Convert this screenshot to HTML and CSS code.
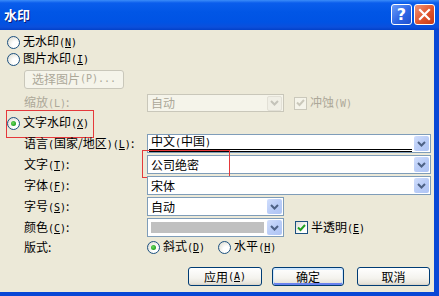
FILE: index.html
```html
<!DOCTYPE html>
<html>
<head>
<meta charset="utf-8">
<link rel="stylesheet" href="styles.css">
</head>
<body>
<div class="window">
  <div class="titlebar">
    <div class="title">水印</div>
    <div class="tbtns">
      <div class="tbtn help">?</div>
      <div class="tbtn close">
        <svg width="13" height="13" viewBox="0 0 13 13"><path d="M2 2 L11 11 M11 2 L2 11" stroke="#fff" stroke-width="2.2" stroke-linecap="square"/></svg>
      </div>
    </div>
  </div>
  <div class="client">
    <div class="row r1">
      <span class="radio"></span><span class="rtext">无水印<span class="mn">(<u>N</u>)</span></span>
    </div>
    <div class="row r2">
      <span class="radio"></span><span class="rtext">图片水印<span class="mn">(<u>I</u>)</span></span>
    </div>
    <div class="row r3">
      <div class="btn disabled pick">选择图片<span class="mn">(P)...</span></div>
    </div>
    <div class="row r4 field">
      <span class="label dis">缩放<span class="mn">(L)</span>:</span>
      <div class="combo short disabled-combo">
        <span class="val">自动</span>
        <span class="drop dis-drop"><svg width="9" height="6" viewBox="0 0 9 6"><path d="M1 1 L4.5 4.5 L8 1" fill="none" stroke="#C4C3BA" stroke-width="2"/></svg></span>
      </div>
      <span class="check disabled-check"><svg width="9" height="8" viewBox="0 0 9 8"><path d="M1 3.5 L3.5 6 L8 1" fill="none" stroke="#CAC8BB" stroke-width="2"/></svg></span>
      <span class="ctext dis">冲蚀<span class="mn">(W)</span></span>
    </div>
    <div class="row r5">
      <span class="radio checked"><span class="dot"></span></span><span class="rtext">文字水印<span class="mn">(<u>X</u>)</span></span>
      <div class="mark mark1"></div>
    </div>
    <div class="row r6 field">
      <span class="label">语言<span class="mn">(</span>国家/地区<span class="mn">)(<u>L</u>)</span>:</span>
      <div class="combo full">
        <span class="val lang">中文<span class="mn">(</span>中国<span class="mn">)</span></span>
        <span class="drop"><svg width="9" height="6" viewBox="0 0 9 6"><path d="M1 1 L4.5 4.5 L8 1" fill="none" stroke="#4D6185" stroke-width="2"/></svg></span>
      </div>
    </div>
    <div class="row r7 field">
      <span class="label">文字<span class="mn">(<u>T</u>)</span>:</span>
      <div class="combo full">
        <span class="val">公司绝密</span>
        <span class="drop"><svg width="9" height="6" viewBox="0 0 9 6"><path d="M1 1 L4.5 4.5 L8 1" fill="none" stroke="#4D6185" stroke-width="2"/></svg></span>
      </div>
      <div class="mark mark2"></div>
    </div>
    <div class="row r8 field">
      <span class="label">字体<span class="mn">(<u>F</u>)</span>:</span>
      <div class="combo full">
        <span class="val">宋体</span>
        <span class="drop"><svg width="9" height="6" viewBox="0 0 9 6"><path d="M1 1 L4.5 4.5 L8 1" fill="none" stroke="#4D6185" stroke-width="2"/></svg></span>
      </div>
    </div>
    <div class="row r9 field">
      <span class="label">字号<span class="mn">(<u>S</u>)</span>:</span>
      <div class="combo short">
        <span class="val">自动</span>
        <span class="drop"><svg width="9" height="6" viewBox="0 0 9 6"><path d="M1 1 L4.5 4.5 L8 1" fill="none" stroke="#4D6185" stroke-width="2"/></svg></span>
      </div>
    </div>
    <div class="row r10 field">
      <span class="label">颜色<span class="mn">(<u>C</u>)</span>:</span>
      <div class="combo short">
        <span class="swatch"></span>
        <span class="drop"><svg width="9" height="6" viewBox="0 0 9 6"><path d="M1 1 L4.5 4.5 L8 1" fill="none" stroke="#4D6185" stroke-width="2"/></svg></span>
      </div>
      <span class="check"><svg width="9" height="8" viewBox="0 0 9 8"><path d="M1 3.5 L3.5 6 L8 1" fill="none" stroke="#21A121" stroke-width="2"/></svg></span>
      <span class="ctext">半透明<span class="mn">(<u>E</u>)</span></span>
    </div>
    <div class="row r11 field">
      <span class="label">版式:</span>
      <span class="radio checked"><span class="dot"></span></span><span class="rtext">斜式<span class="mn">(<u>D</u>)</span></span>
      <span class="radio second"></span><span class="rtext">水平<span class="mn">(<u>H</u>)</span></span>
    </div>
    <div class="row r12">
      <div class="btn b-apply">应用<span class="mn">(<u>A</u>)</span></div>
      <div class="btn default b-ok">确定</div>
      <div class="btn b-cancel">取消</div>
    </div>
  </div>
</div>
</body>
</html>
```
FILE: styles.css
```css
* { box-sizing: border-box; }
body {
  margin: 0;
  font-family: "Noto Sans CJK SC", "Noto Sans", sans-serif;
  font-size: 12px;
  line-height: 14px;
  color: #000;
  background: #fff;
}
.window {
  width: 439px;
  height: 296px;
  display: flex;
  flex-direction: column;
  background: #0847D6;
}
.titlebar {
  height: 30px;
  flex: none;
  display: flex;
  align-items: center;
  justify-content: space-between;
  padding: 0 4px 0 4px;
  background: linear-gradient(#3B8CF9 0px, #0A5DEC 3px, #0156E6 12px, #0053E4 22px, #0B4FDC 27px, #0340C8 30px);
}
.title {
  color: #fff;
  font-weight: bold;
  font-size: 13px;
  line-height: 16px;
  text-shadow: 1px 1px 0 #0A1A7A;
  margin-top: -1px;
}
.tbtns {
  display: flex;
  gap: 2px;
  margin-top: -1px;
}
.tbtn {
  width: 21px;
  height: 21px;
  border: 1px solid #fff;
  border-radius: 3px;
  display: flex;
  align-items: center;
  justify-content: center;
}
.help {
  background: linear-gradient(135deg, #6A9CF8, #2E66E5 55%, #1F4FCF);
  color: #fff;
  font-family: "DejaVu Sans", sans-serif;
  font-weight: bold;
  font-size: 16px;
  line-height: 19px;
}
.close {
  background: linear-gradient(135deg, #F0957A, #E0542C 55%, #C53A16);
}
.client {
  flex: 1;
  margin-right: 5px;
  margin-bottom: 4px;
  background: #ECE9D8;
  display: flex;
  flex-direction: column;
}
.row {
  display: flex;
  align-items: center;
  position: relative;
  flex: none;
}
.r1 { margin-top: 5px; height: 14px; padding-left: 7px; }
.r2 { margin-top: 3px; height: 14px; padding-left: 7px; }
.r3 { margin-top: 4px; height: 18px; padding-left: 24px; }
.r4 { margin-top: 6px; height: 18px; }
.r5 { margin-top: 4px; height: 14px; padding-left: 7px; }
.r6 { margin-top: 4px; height: 19px; }
.r7 { margin-top: 2px; height: 19px; }
.r8 { margin-top: 2px; height: 19px; }
.r9 { margin-top: 2px; height: 19px; }
.r10 { margin-top: 2px; height: 19px; }
.r11 { margin-top: 3px; height: 14px; }
.r12 { margin-top: 13px; height: 19px; padding-left: 188px; }

.field { padding-left: 24px; }
.label {
  width: 123px;
  flex: none;
  white-space: nowrap;
}
.dis { color: #ACA899; }
.mn {
  font-family: "DejaVu Sans Mono", monospace;
  font-size: 10px;
}
.mn u { text-decoration: underline; text-underline-offset: 1px; }

.radio {
  width: 13px;
  height: 13px;
  flex: none;
  border-radius: 50%;
  border: 1px solid #1C5180;
  background: radial-gradient(circle at 70% 70%, #FFFFFF 30%, #E8E7E0 70%, #D4D2C6);
  display: flex;
  align-items: center;
  justify-content: center;
}
.radio .dot {
  width: 5px;
  height: 5px;
  border-radius: 50%;
  background: radial-gradient(circle at 40% 40%, #6EDB5E, #21A121 70%);
}
.rtext { margin-left: 3px; white-space: nowrap; }
.radio.second { margin-left: 13px; }

.combo {
  height: 19px;
  border: 1px solid #7F9DB9;
  background: #fff;
  display: flex;
  align-items: center;
  padding: 1px;
  flex: none;
}
.r4 .combo { height: 18px; }
.combo.full { width: 284px; }
.combo.short { width: 137px; }
.combo .val {
  flex: 1;
  padding-left: 2px;
  white-space: nowrap;
}
.combo .val.lang {
  border-bottom: 3px double #000;
  margin-right: 2px;
  line-height: 12px;
  margin-top: -1px;
}
.drop {
  width: 15px;
  height: 15px;
  flex: none;
  border-radius: 2px;
  background: linear-gradient(135deg, #D1DEFC, #BACDF7 50%, #AFC4F4);
  display: flex;
  align-items: center;
  justify-content: center;
}
.disabled-combo {
  border-color: #C9C7BA;
  background: #F5F4EA;
  color: #ACA899;
}
.dis-drop {
  background: #F0EFE6;
  border: 1px solid #E2E0D6;
}
.swatch {
  flex: 1;
  height: 11px;
  margin: 0 3px 0 2px;
  background: #C0C0C0;
}
.check {
  width: 13px;
  height: 13px;
  flex: none;
  border: 1px solid #1C5180;
  background: linear-gradient(135deg, #DCDBD5, #FFFFFF 70%);
  margin-left: 11px;
  display: flex;
  align-items: center;
  justify-content: center;
}
.disabled-check {
  border-color: #CAC8BB;
  background: #F5F4EA;
  margin-left: 10px;
}
.ctext { margin-left: 3px; white-space: nowrap; }

.btn {
  height: 19px;
  border: 1px solid #003C74;
  border-radius: 3px;
  background: linear-gradient(#FFFFFF, #F4F3EE 60%, #E6E3DA 90%, #D6D0C5);
  display: flex;
  align-items: center;
  justify-content: center;
  flex: none;
  white-space: nowrap;
}
.btn.disabled {
  border-color: #C9C7BA;
  background: #F5F4EA;
  color: #ACA899;
}
.pick { width: 100px; }
.b-apply { width: 74px; }
.b-ok { width: 72px; margin-left: 10px; }
.b-cancel { width: 73px; margin-left: 13px; }
.btn.default {
  box-shadow: inset 0 1px 0 1px #CEE7FF, inset 0 -1px 0 1px #6982EE;
}

.mark {
  position: absolute;
  border: 1px solid #E5393B;
  pointer-events: none;
}
.mark1 { left: 6px; top: -6px; width: 88px; height: 28px; }
.mark2 { left: 142px; top: -5px; width: 88px; height: 28px; }
```
